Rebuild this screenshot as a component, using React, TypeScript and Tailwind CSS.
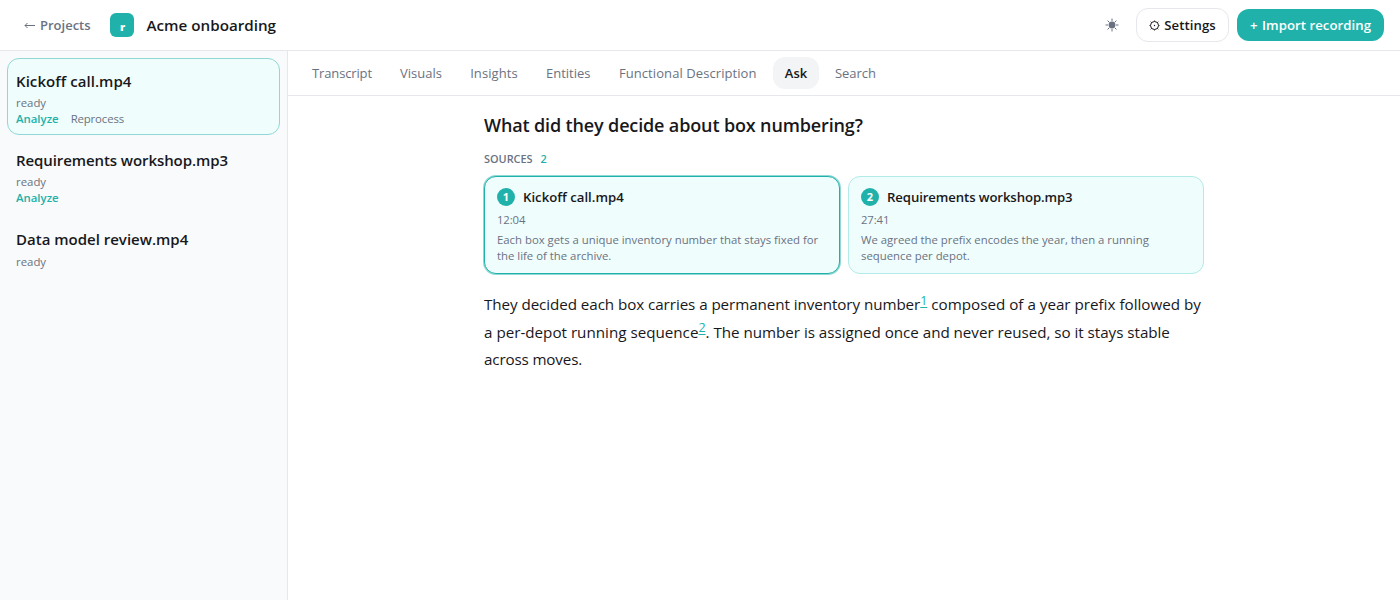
import { useState } from 'react';

interface Recording {
  id: string;
  name: string;
  status: string;
  actions: string[];
  nameClass: string;
}

interface Source {
  id: number;
  file: string;
  time: string;
  excerpt: string[];
  fileClass: string;
}

const recordings: Recording[] = [
  { id: 'kickoff', name: 'Kickoff call.mp4', status: 'ready', actions: ['Analyze', 'Reprocess'], nameClass: 'tracking-[0.06px]' },
  { id: 'workshop', name: 'Requirements workshop.mp3', status: 'ready', actions: ['Analyze'], nameClass: 'tracking-[-0.09px]' },
  { id: 'review', name: 'Data model review.mp4', status: 'ready', actions: [], nameClass: 'tracking-normal' },
];

const tabs = [
  { label: 'Transcript', className: 'w-[84px] tracking-[-0.15px]' },
  { label: 'Visuals', className: 'w-[66px]' },
  { label: 'Insights', className: 'w-[72px] tracking-[0.1px]' },
  { label: 'Entities', className: 'w-[68.5px]' },
  { label: 'Functional Description', className: 'w-[162.5px] tracking-[0.08px]' },
  { label: 'Ask', className: 'w-[46px]' },
  { label: 'Search', className: 'w-[65px]' },
];

const sources: Source[] = [
  {
    id: 1,
    file: 'Kickoff call.mp4',
    time: '12:04',
    excerpt: ['Each box gets a unique inventory number that stays fixed for', 'the life of the archive.'],
    fileClass: 'tracking-normal',
  },
  {
    id: 2,
    file: 'Requirements workshop.mp3',
    time: '27:41',
    excerpt: ['We agreed the prefix encodes the year, then a running', 'sequence per depot.'],
    fileClass: 'tracking-[-0.11px]',
  },
];

function SunIcon() {
  return (
    <svg width="14" height="14" viewBox="0 0 14 14" stroke="currentColor" strokeWidth="1">
      <circle cx="7" cy="7" r="3.4" fill="currentColor" stroke="none" />
      <path d="M7 0.5V3M7 11v2.5M0.5 7H3M11 7h2.5M2.6 2.6l1.6 1.6M9.8 9.8l1.6 1.6M11.4 2.6L9.8 4.2M4.2 9.8l-1.6 1.6" />
    </svg>
  );
}

function GearIcon() {
  return (
    <svg width="11" height="11" viewBox="0 0 11 11" fill="none" stroke="currentColor">
      <circle cx="5.5" cy="5.5" r="4" strokeWidth="1" />
      <circle cx="5.5" cy="5.5" r="0.7" fill="currentColor" stroke="none" />
      <path
        strokeWidth="0.9"
        d="M5.5 0.5v1M5.5 9.5v1M0.5 5.5h1M9.5 5.5h1M1.7 1.7l0.8 0.8M8.5 8.5l0.8 0.8M9.3 1.7l-0.8 0.8M2.5 8.5l-0.8 0.8"
      />
    </svg>
  );
}

function ArrowLeftIcon() {
  return (
    <svg width="11" height="9" viewBox="0 0 11 9" fill="none" stroke="currentColor" strokeWidth="1">
      <path d="M11 4.5H1M3.5 2L1 4.5L3.5 7" />
    </svg>
  );
}

function Cite({ n }: { n: number }) {
  return (
    <sup className="relative top-[-5.5px] align-baseline text-[12.5px] leading-none text-[#20b2aa] underline underline-offset-2">
      {n}
    </sup>
  );
}

export default function App() {
  const [selected, setSelected] = useState('kickoff');
  const [tab, setTab] = useState('Ask');
  const [activeSource, setActiveSource] = useState(1);

  return (
    <div className="flex h-screen flex-col overflow-hidden bg-white font-['Open_Sans','Noto_Sans',sans-serif] text-[#18181b]">
      <header className="flex h-[51px] shrink-0 items-center border-b border-gray-200 pl-6 pr-4">
        <button className="flex w-[86px] items-center gap-[5px] whitespace-nowrap pt-px text-[13px] font-semibold text-gray-500">
          <ArrowLeftIcon />
          Projects
        </button>
        <span className="flex size-6 items-center justify-center rounded-md bg-[#20b2aa] pl-px pt-[3px] text-[11px] font-extrabold leading-none text-white">
          r
        </span>
        <h1 className="ml-[12.5px] text-[15.2px] font-semibold">Acme onboarding</h1>
        <div className="ml-auto flex items-center">
          <button className="mr-[17px] text-gray-500">
            <SunIcon />
          </button>
          <button className="flex h-[34px] w-[93px] items-center justify-center gap-[4px] whitespace-nowrap rounded-xl border border-gray-200 text-[13.2px] font-semibold">
            <GearIcon />
            <span className="pt-px tracking-[0.08px]">Settings</span>
          </button>
          <button className="ml-2 flex h-8 w-[147px] items-center justify-center gap-[4.5px] whitespace-nowrap rounded-xl bg-[#20b2aa] pt-px text-[13.2px] font-semibold text-white">
            <span>+</span>
            <span className="tracking-[0.04px]">Import recording</span>
          </button>
        </div>
      </header>

      <div className="flex min-h-0 flex-1">
        <aside className="flex w-72 shrink-0 flex-col gap-[2.2px] border-r border-gray-200 bg-[#f9fafb] px-[7px] pt-[7px]">
          {recordings.map((rec) => (
            <div
              key={rec.id}
              onClick={() => setSelected(rec.id)}
              className={`h-[77px] shrink-0 rounded-xl border px-2 pt-[10px] ${
                selected === rec.id ? 'border-[#8fd8d4] bg-[#f0fdfd]' : 'border-transparent'
              }`}
            >
              <p className={`whitespace-nowrap text-[15px] font-semibold leading-6 ${rec.nameClass}`}>{rec.name}</p>
              <p className="mt-[2.25px] text-[11.4px] leading-4 text-gray-500">{rec.status}</p>
              <div className="flex gap-3 text-[11.4px] leading-4">
                {rec.actions.map((action) => (
                  <button
                    key={action}
                    className={action === 'Analyze' ? 'font-semibold text-[#20b2aa]' : 'tracking-[-0.15px] text-gray-500'}
                  >
                    {action}
                  </button>
                ))}
              </div>
            </div>
          ))}
        </aside>

        <main className="flex min-w-0 flex-1 flex-col">
          <nav className="flex h-[45px] shrink-0 items-center gap-1 border-b border-gray-200 px-3">
            {tabs.map((t) => (
              <button
                key={t.label}
                onClick={() => setTab(t.label)}
                className={`h-8 whitespace-nowrap rounded-xl pt-px text-[13px] ${t.className} ${
                  tab === t.label ? 'bg-gray-100 font-semibold text-[#18181b]' : 'text-gray-500'
                }`}
              >
                {t.label}
              </button>
            ))}
          </nav>

          <section className="mx-auto w-[720px] pt-[15px]">
            <h2 className="text-[18px] font-semibold leading-7 tracking-[-0.14px]">What did they decide about box numbering?</h2>
            <div className="mt-3 flex gap-2 text-[10.9px] font-semibold leading-4 text-gray-500">
              <span>SOURCES</span>
              <span className="text-[#20b2aa]">{sources.length}</span>
            </div>

            <div className="mt-[9px] grid grid-cols-2 gap-2">
              {sources.map((src) => (
                <div
                  key={src.id}
                  onClick={() => setActiveSource(src.id)}
                  className={`h-[98px] rounded-xl border bg-[#f0fdfd] px-3 pt-[11px] ${
                    activeSource === src.id ? 'border-[#20b2aa] shadow-[0_0_0_1px_rgba(32,178,170,0.5)]' : 'border-[#b2ebe8]'
                  }`}
                >
                  <div className="flex h-[18px] items-center gap-2">
                    <span className="flex size-[18px] items-center justify-center rounded-full bg-[#20b2aa] text-[11px] font-bold text-white">
                      {src.id}
                    </span>
                    <span className={`whitespace-nowrap pt-px text-[13.2px] font-semibold ${src.fileClass}`}>{src.file}</span>
                  </div>
                  <p className="mt-[6px] text-[11.3px] leading-4 tracking-[-0.1px] text-gray-500">{src.time}</p>
                  <p className="mt-[4px] whitespace-nowrap text-[11.35px] leading-4 text-gray-500">
                    {src.excerpt[0]}
                    <br />
                    {src.excerpt[1]}
                  </p>
                </div>
              ))}
            </div>

            <p className="mt-[17px] whitespace-nowrap text-[15.2px] leading-[27.5px]">
              <span className="tracking-[-0.07px]">They decided each box carries a permanent inventory number</span>
              <Cite n={1} />
              <span> composed of a year prefix followed by</span>
              <br />a per-depot running sequence
              <Cite n={2} />
              <span className="tracking-[-0.03px]">. The number is assigned once and never reused, so it stays stable</span>
              <br />
              <span className="tracking-[-0.15px]">across moves.</span>
            </p>
          </section>
        </main>
      </div>
    </div>
  );
}
